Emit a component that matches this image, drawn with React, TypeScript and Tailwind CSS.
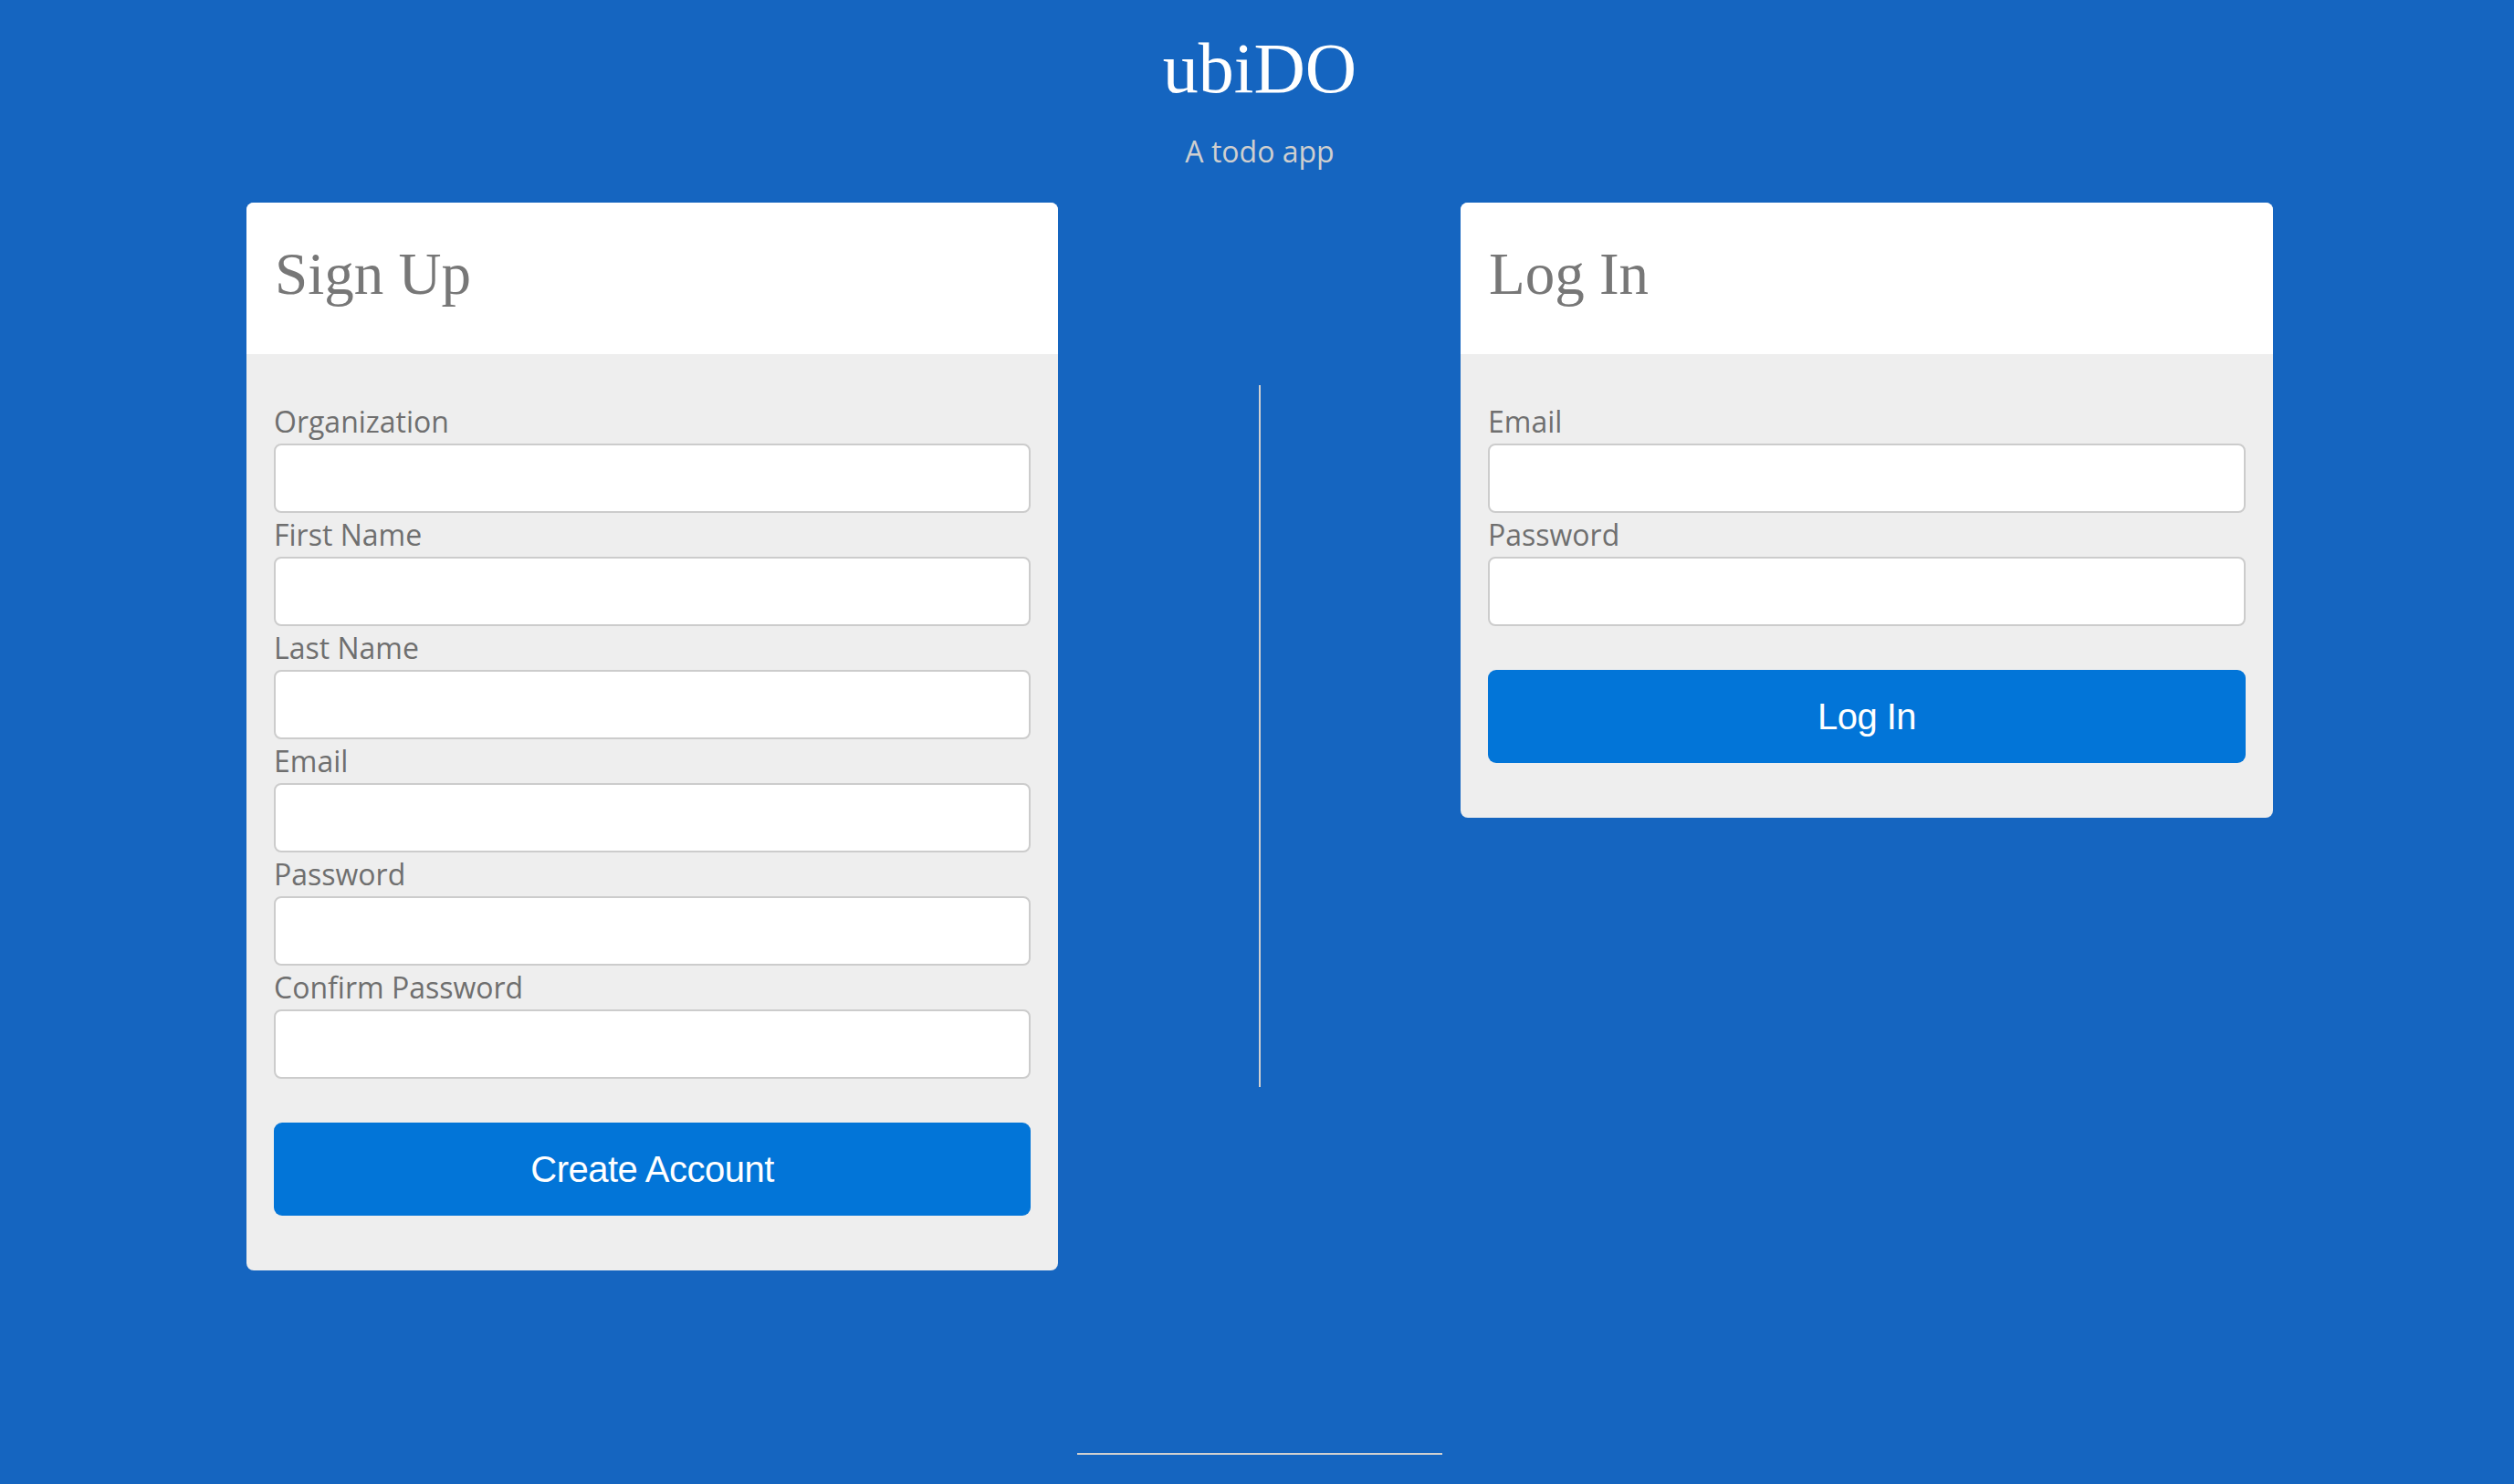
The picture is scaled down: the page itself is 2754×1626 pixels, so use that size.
const Field = ({ label, type = 'text' }: { label: string; type?: string }) => {
  return (
    <div className="flex flex-col">
      <label className="text-[32px] leading-[48px] text-[#6f6f6f]">{label}</label>
      <input
        type={type}
        className="h-[76px] w-full rounded-[8px] border-2 border-[#cccccc] bg-white px-6 text-[32px] outline-none"
      />
    </div>
  );
};

const Card = ({
  title,
  fields,
  button,
  width,
}: {
  title: string;
  fields: { label: string; type?: string }[];
  button: string;
  width: string;
}) => {
  return (
    <div className={`${width} overflow-hidden rounded-[8px] bg-[#eeeeee]`}>
      {/* Card header */}
      <div className="h-[166px] bg-white px-[31px] pt-[46px]">
        <h2 className="font-['Liberation_Serif',serif] text-[65px] leading-none text-[#777777]">{title}</h2>
      </div>

      {/* Card body */}
      <div className="px-[30px] pt-[50px] pb-[60px]">
        {fields.map((f) => (
          <Field key={f.label} label={f.label} type={f.type} />
        ))}
        <button className="mt-[48px] h-[102px] w-full rounded-[9px] bg-[#0275d8] font-['Liberation_Sans',Arial,sans-serif] text-[40px] tracking-[-0.5px] text-white">
          {button}
        </button>
      </div>
    </div>
  );
};

const App = () => {
  return (
    <div className="min-h-[1626px] w-full bg-[#1565c0] font-['Open_Sans',sans-serif]">
      <div className="ml-[240px] w-[2280px]">
        {/* Title */}
        <div className="flex flex-col items-center pt-[36px]">
          <h1 className="font-['Liberation_Serif',serif] text-[78px] leading-none text-white">ubiDO</h1>
          <p className="mt-[28px] text-[32px] leading-[48px] text-[#cfcfcf]">A todo app</p>
        </div>

        {/* Forms */}
        <div className="mt-[32px] flex items-start px-[30px]">
          <Card
            width="w-[889px]"
            title="Sign Up"
            button="Create Account"
            fields={[
              { label: 'Organization' },
              { label: 'First Name' },
              { label: 'Last Name' },
              { label: 'Email', type: 'email' },
              { label: 'Password', type: 'password' },
              { label: 'Confirm Password', type: 'password' },
            ]}
          />
          <div className="flex w-[441px] justify-center pt-[200px]">
            <div className="h-[769px] w-[2px] bg-[#d0d0d0]" />
          </div>
          <Card
            width="w-[890px]"
            title="Log In"
            button="Log In"
            fields={[
              { label: 'Email', type: 'email' },
              { label: 'Password', type: 'password' },
            ]}
          />
        </div>

        {/* Footer rule */}
        <div className="mt-[200px] flex justify-center">
          <div className="h-[2px] w-[400px] bg-[#d0d0d0]" />
        </div>
      </div>
    </div>
  );
};

export default App;
